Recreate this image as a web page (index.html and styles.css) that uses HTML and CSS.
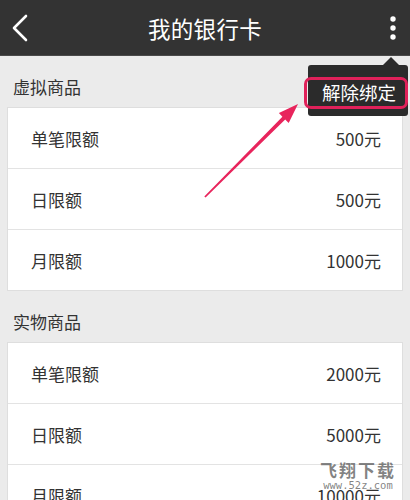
FILE: index.html
```
<!DOCTYPE html>
<html>
  <head>
    <meta charset="utf-8" />
    <title>我的银行卡</title>
    <link rel="stylesheet" href="styles.css">
  </head>
  <body>
    <!-- Top bar -->
    <header class="topbar">
      <svg class="back" width="40" height="55" viewBox="0 0 40 55">
        <polyline points="26,16 14,28 26,40" fill="none" stroke="#fff" stroke-width="2.6" stroke-linecap="round" stroke-linejoin="round" />
      </svg>
      <h1 class="title">我的银行卡</h1>
      <svg class="more" width="40" height="55" viewBox="0 0 40 55">
        <circle cx="23" cy="19" r="2.7" fill="#fff" />
        <circle cx="23" cy="28" r="2.7" fill="#fff" />
        <circle cx="23" cy="37" r="2.7" fill="#fff" />
      </svg>
    </header>

    <!-- Virtual goods -->
    <div class="section-label">虚拟商品</div>
    <div class="card">
      <div class="row"><span>单笔限额</span><span>500元</span></div>
      <div class="row"><span>日限额</span><span>500元</span></div>
      <div class="row"><span>月限额</span><span>1000元</span></div>
    </div>

    <!-- Physical goods -->
    <div class="section-label">实物商品</div>
    <div class="card">
      <div class="row"><span>单笔限额</span><span>2000元</span></div>
      <div class="row"><span>日限额</span><span>5000元</span></div>
      <div class="row"><span>月限额</span><span>10000元</span></div>
    </div>

    <!-- Overflow menu -->
    <div class="menu">
      <span class="menu-item">解除绑定</span>
      <div class="highlight"></div>
    </div>

    <!-- Annotation arrow -->
    <svg class="pointer" width="410" height="500" viewBox="0 0 410 500">
      <polygon fill="#e8245c" points="204.3,196.4 282.4,116.7 278.9,113.1 298,104 288.7,123.1 285.2,119.5 205.6,197.6" />
    </svg>

    <div class="watermark">
      <div class="wm-big">飞翔下载</div>
      <div class="wm-small">www.52z.com</div>
    </div>
  </body>
</html>
```
FILE: styles.css
```
body {
  margin: 0;
  width: 410px;
  height: 500px;
  overflow: hidden;
  position: relative;
  background: #ebebeb;
  font-family: "Noto Sans CJK SC", "Noto Sans", sans-serif;
  color: #333;
}
.topbar {
  height: 55px;
  background: #333333;
  border-bottom: 1px solid #4a4a4a;
  display: flex;
  align-items: center;
  justify-content: space-between;
}
.back, .more {
  display: block;
}
.title {
  margin: 0;
  font-size: 22.5px;
  font-weight: normal;
  color: #fff;
  letter-spacing: 0.3px;
}
.section-label {
  font-size: 17px;
  line-height: 22px;
  padding: 20px 0 9px 13px;
  color: #333;
}
.card {
  margin: 0 7px;
  background: #fff;
  border: 1px solid #dedede;
}
.row {
  height: 60px;
  display: flex;
  align-items: center;
  justify-content: space-between;
  padding: 0 21px 0 23px;
  font-size: 17px;
  color: #333;
}
.row + .row {
  border-top: 1px solid #e3e3e3;
}
.menu {
  position: absolute;
  left: 308px;
  top: 65px;
  width: 100px;
  height: 51px;
  background: #2b2b2b;
  border-radius: 3px;
  box-sizing: border-box;
  padding: 16px 0 0 14px;
}
.menu::before {
  content: "";
  position: absolute;
  top: -8px;
  right: 9px;
  border-left: 8px solid transparent;
  border-right: 8px solid transparent;
  border-bottom: 8px solid #2b2b2b;
}
.menu-item {
  display: block;
  font-size: 18.5px;
  line-height: 22px;
  color: #fff;
}
.highlight {
  position: absolute;
  left: -4px;
  top: 12px;
  width: 104px;
  height: 32px;
  box-sizing: border-box;
  border: 3px solid #e0215a;
  border-radius: 7px;
}
.pointer {
  position: absolute;
  left: 0;
  top: 0;
}
.watermark {
  position: absolute;
  left: 318px;
  top: 460px;
  width: 80px;
  text-align: center;
  color: rgba(90, 90, 90, 0.75);
}
.wm-big {
  font-size: 17px;
  font-weight: bold;
  line-height: 19px;
  letter-spacing: 2px;
}
.wm-small {
  font-family: "DejaVu Sans Mono", monospace;
  font-size: 10.5px;
  line-height: 12px;
}
```
